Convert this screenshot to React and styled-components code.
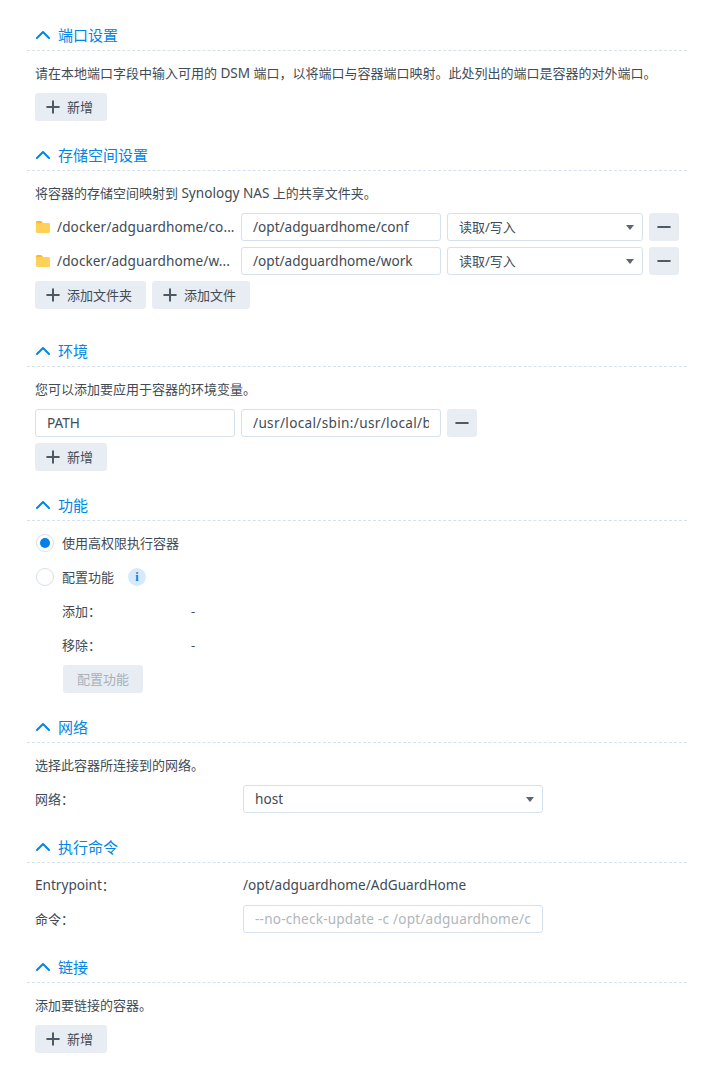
import React from 'react';
import styled, { createGlobalStyle } from 'styled-components';
import { ChevronUp, Plus, Minus } from 'lucide-react';

const GlobalStyle = createGlobalStyle`
  html, body {
    margin: 0;
    padding: 0;
    background: #fff;
  }
  body {
    font-family: "Noto Sans", "Noto Sans CJK SC", sans-serif;
    font-size: 13px;
    line-height: 20px;
    color: #414b55;
  }
`;

const Page = styled.div`
  padding: 20px 28px 19px 27px;
`;

const Section = styled.section`
  margin-bottom: ${props => props.$gap || 19}px;
`;

const Header = styled.div`
  display: flex;
  align-items: center;
  height: 30px;
  border-bottom: 1px dashed #d5e1ec;
  color: #0086e5;
  font-size: 15px;
`;

const Chevron = styled(ChevronUp)`
  width: 24px;
  height: 24px;
  margin-left: 4px;
  margin-right: 3px;
  color: #0086e5;
`;

const Body = styled.div`
  display: flex;
  flex-direction: column;
  gap: 6px;
  padding: 8px 8px 0;
`;

const Row = styled.div`
  display: flex;
  align-items: center;
  gap: 6px;
  height: 28px;
  white-space: nowrap;
`;

const TextRow = styled(Row)`
  display: block;
  line-height: 28px;
`;

const Latin = styled.span`
  font-size: 13.6px;
`;

const SourcePath = styled(Latin)`
  letter-spacing: 0.08px;
`;

const Indented = styled(Row)`
  padding-left: 27px;
  gap: 0;
`;

const Label = styled.div`
  width: 202px;
  flex-shrink: 0;
`;

const SubLabel = styled(Label)`
  width: 129px;
`;

const Button = styled.button`
  display: inline-flex;
  align-items: center;
  justify-content: center;
  gap: 4px;
  height: 28px;
  padding: 0 14px 0 8px;
  border: 0;
  border-radius: 3px;
  background: #e8edf4;
  color: #414b55;
  font: inherit;
`;

const DisabledButton = styled(Button)`
  width: 80px;
  padding: 0;
  margin-left: 1px;
  color: #a9b0b9;
`;

const SquareButton = styled(Button)`
  width: 30px;
  padding: 0;
`;

const Field = styled.div`
  box-sizing: border-box;
  display: flex;
  align-items: center;
  flex-shrink: 0;
  width: ${props => props.$width || 200}px;
  height: 28px;
  padding: 0 11px;
  border: 1px solid #d5e1ec;
  border-radius: 3px;
  background: #fff;
  color: ${props => (props.$placeholder ? '#b0b6bd' : '#414b55')};
  overflow: hidden;
  white-space: nowrap;
`;

const Clip = styled(Latin)`
  display: block;
  overflow: hidden;
  letter-spacing: ${props => props.$spread || 0}px;
`;

const Select = styled(Field)`
  justify-content: space-between;
  padding-right: 8px;
`;

const Caret = styled.span`
  width: 0;
  height: 0;
  border-left: 4.5px solid transparent;
  border-right: 4.5px solid transparent;
  border-top: 5px solid #5d6670;
`;

const FolderCell = styled.div`
  display: flex;
  align-items: center;
  gap: 7px;
  width: 200px;
  flex-shrink: 0;
  padding-left: 1px;
  box-sizing: border-box;
`;

const RadioMark = styled.span`
  box-sizing: border-box;
  display: flex;
  align-items: center;
  justify-content: center;
  width: 18px;
  height: 18px;
  margin: 0 8px 0 1px;
  border: 1px solid #d5e1ec;
  border-radius: 50%;
  background: #fff;
  &::after {
    content: '';
    display: ${props => (props.$checked ? 'block' : 'none')};
    width: 10px;
    height: 10px;
    border-radius: 50%;
    background: #0080e8;
  }
`;

const RadioRow = styled(Row)`
  gap: 0;
`;

const InfoBadge = styled.span`
  display: flex;
  align-items: center;
  justify-content: center;
  width: 18px;
  height: 18px;
  margin-left: 14px;
  border-radius: 50%;
  background: #d6eafb;
  color: #0080e8;
  font-family: "Liberation Serif", serif;
  font-size: 12px;
  font-weight: 700;
`;

const iconProps = { size: 20, strokeWidth: 2.4, color: '#4f5964' };

const FolderIcon = () => (
  <svg width="14" height="14" viewBox="0 0 14 14" style={{ flexShrink: 0 }}>
    <path d="M0 2.5C0 1.7.6 1 1.4 1h3.2c.4 0 .7.1 1 .4L7 3H0z" fill="#fbb82e" />
    <path d="M0 3h12.6c.8 0 1.4.6 1.4 1.4v7.2c0 .8-.6 1.4-1.4 1.4H1.4C.6 13 0 12.4 0 11.6z" fill="#ffd257" />
  </svg>
);

const AddButton = ({ children }) => (
  <Button>
    <Plus {...iconProps} />
    {children}
  </Button>
);

const RemoveButton = () => (
  <SquareButton>
    <Minus {...iconProps} />
  </SquareButton>
);

const Block = ({ title, gap, children }) => (
  <Section $gap={gap}>
    <Header>
      <Chevron strokeWidth={2} />
      {title}
    </Header>
    <Body>{children}</Body>
  </Section>
);

const VolumeRow = ({ source, target }) => (
  <Row>
    <FolderCell>
      <FolderIcon />
      <SourcePath>{source}</SourcePath>
    </FolderCell>
    <Field><Latin>{target}</Latin></Field>
    <Select $width={196}>
      读取/写入
      <Caret />
    </Select>
    <RemoveButton />
  </Row>
);

export default function App() {
  return (
    <Page>
      <GlobalStyle />
      <Block title="端口设置">
        <TextRow>请在本地端口字段中输入可用的 <Latin>DSM</Latin> 端口，以将端口与容器端口映射。此处列出的端口是容器的对外端口。</TextRow>
        <Row><AddButton>新增</AddButton></Row>
      </Block>

      <Block title="存储空间设置" gap={27}>
        <TextRow>将容器的存储空间映射到 <Latin>Synology NAS</Latin> 上的共享文件夹。</TextRow>
        <VolumeRow source="/docker/adguardhome/co..." target="/opt/adguardhome/conf" />
        <VolumeRow source="/docker/adguardhome/w..." target="/opt/adguardhome/work" />
        <Row>
          <AddButton>添加文件夹</AddButton>
          <AddButton>添加文件</AddButton>
        </Row>
      </Block>

      <Block title="环境">
        <TextRow>您可以添加要应用于容器的环境变量。</TextRow>
        <Row>
          <Field><Latin>PATH</Latin></Field>
          <Field><Clip $spread={0.33}>/usr/local/sbin:/usr/local/bin:/usr/sbin</Clip></Field>
          <RemoveButton />
        </Row>
        <Row><AddButton>新增</AddButton></Row>
      </Block>

      <Block title="功能">
        <RadioRow>
          <RadioMark $checked />
          使用高权限执行容器
        </RadioRow>
        <RadioRow>
          <RadioMark />
          配置功能
          <InfoBadge>i</InfoBadge>
        </RadioRow>
        <Indented>
          <SubLabel>添加：</SubLabel>
          -
        </Indented>
        <Indented>
          <SubLabel>移除：</SubLabel>
          -
        </Indented>
        <Indented><DisabledButton>配置功能</DisabledButton></Indented>
      </Block>

      <Block title="网络">
        <TextRow>选择此容器所连接到的网络。</TextRow>
        <Row>
          <Label>网络：</Label>
          <Select $width={300}>
            <Latin>host</Latin>
            <Caret />
          </Select>
        </Row>
      </Block>

      <Block title="执行命令">
        <Row>
          <Label><Latin>Entrypoint</Latin>：</Label>
          <Latin>/opt/adguardhome/AdGuardHome</Latin>
        </Row>
        <Row>
          <Label>命令：</Label>
          <Field $width={300} $placeholder>
            <Clip $spread={0.2}>--no-check-update -c /opt/adguardhome/conf/AdGuardHome.yaml</Clip>
          </Field>
        </Row>
      </Block>

      <Block title="链接" gap={0}>
        <TextRow>添加要链接的容器。</TextRow>
        <Row><AddButton>新增</AddButton></Row>
      </Block>
    </Page>
  );
}
